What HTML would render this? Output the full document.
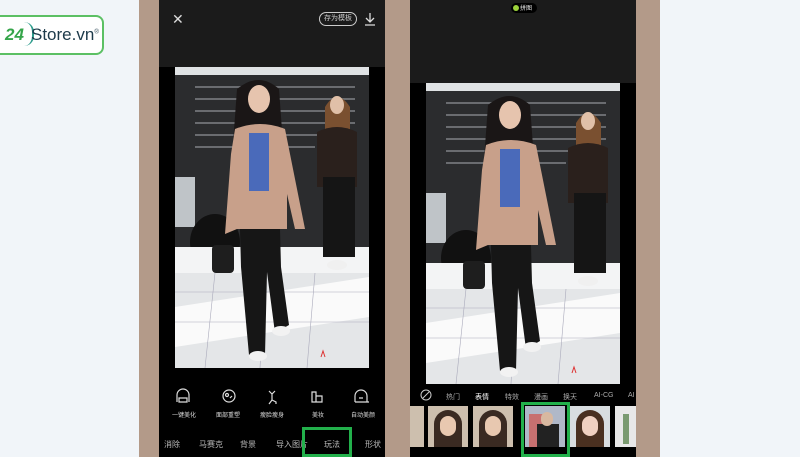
<!DOCTYPE html>
<html><head><meta charset="utf-8">
<style>
*{margin:0;padding:0;box-sizing:border-box}
body{width:800px;height:457px;overflow:hidden;background:#f1f5f9;position:relative;font-family:"Liberation Sans","Noto Sans CJK SC",sans-serif}
.tan{position:absolute;left:139px;top:0;width:521px;height:457px;background:#b39a89}
.phone{position:absolute;top:0;height:457px;background:#000}
.top{position:absolute;left:0;top:0;right:0;background:#1b1b1b}
.photo{position:absolute;width:194px;height:301px;overflow:hidden}
.t{position:absolute;color:#ddd;font-size:6px;white-space:nowrap}
.tab{position:absolute;color:#bbb;font-size:8px;white-space:nowrap}
.green{position:absolute;border:3px solid #22b04b}
.thumb{position:absolute;top:406px;width:40px;height:41px;background:#cdbfae;overflow:hidden}
</style></head><body>
<div style="position:absolute;left:-8px;top:15px;width:112px;height:40px;border:2.5px solid #5cc064;border-radius:8px;background:#fff;border-left-color:#2aa39a"></div>
<div style="position:absolute;left:5px;top:25px;font-size:17px;font-weight:bold;font-style:italic;color:#35a54a">24</div>
<div style="position:absolute;left:24px;top:22px;width:10px;height:24px;border-right:2px solid #2a9a8a;border-radius:0 12px 12px 0"></div>
<div style="position:absolute;left:31px;top:25px;font-size:17px;color:#1d3a4a">Store.vn<sup style="font-size:6px">®</sup></div>

<div class="tan"></div>

<div class="phone" style="left:159px;width:226px">
  <div class="top" style="height:67px"></div>
  <div style="position:absolute;left:13px;top:12px;color:#ddd;font-size:14px;line-height:14px">✕</div>
  <div style="position:absolute;left:160px;top:12px;width:38px;height:14px;border:1px solid #ccc;border-radius:7px;color:#ccc;font-size:7px;text-align:center;line-height:12px">存为模板</div>
  <svg style="position:absolute;left:205px;top:12px" width="12" height="14"><path d="M6 1v9M2 6l4 4 4-4M1 13h10" stroke="#ddd" stroke-width="1.3" fill="none"/></svg>
  <svg style="position:absolute;left:0;top:388px" width="226" height="20" fill="none" stroke="#ddd" stroke-width="1.2">
    <path d="M18 14v-7a6 6 0 0 1 12 0M20 10h8v4h-8zM30 6v8"/>
    <circle cx="70" cy="8" r="6"/><circle cx="68" cy="7" r="1.5"/><path d="M71 10l2-2"/>
    <path d="M110 3l3 3 3-3M113 6v6l-3 4M113 12l4 2v2"/>
    <path d="M153 4h4v10h-4zM157 8h6v6h-6z"/>
    <path d="M196 14v-6a6 6 0 0 1 12 0v6M196 14h14M200 10h4"/>
  </svg>
  <div class="t" style="left:13px;top:410px">一键美化</div>
  <div class="t" style="left:57px;top:410px">面部重塑</div>
  <div class="t" style="left:101px;top:410px">瘦脸瘦身</div>
  <div class="t" style="left:153px;top:410px">美妆</div>
  <div class="t" style="left:192px;top:410px">自动美颜</div>
  <div class="tab" style="left:5px;top:439px">消除</div>
  <div class="tab" style="left:40px;top:439px">马赛克</div>
  <div class="tab" style="left:81px;top:439px">背景</div>
  <div class="tab" style="left:117px;top:439px">导入图片</div>
  <div class="tab" style="left:165px;top:439px">玩法</div>
  <div class="tab" style="left:206px;top:439px">形状</div>
</div>
<div class="green" style="left:302px;top:427px;width:50px;height:30px"></div>

<div class="phone" style="left:410px;width:226px">
  <div class="top" style="height:83px"></div>
  <div style="position:absolute;left:101px;top:3px;width:26px;height:10px;background:#000;border-radius:5px"></div>
  <div style="position:absolute;left:103px;top:5px;width:6px;height:6px;background:#9bd13a;border-radius:50%"></div>
  <div style="position:absolute;left:110px;top:3px;color:#eee;font-size:6px">拼图</div>
  <svg style="position:absolute;left:10px;top:389px" width="12" height="12"><circle cx="6" cy="6" r="5" stroke="#ccc" fill="none"/><path d="M3 9l6-6" stroke="#ccc"/></svg>
  <div class="t" style="left:36px;top:392px;font-size:7px;color:#aaa">热门</div>
  <div class="t" style="left:65px;top:392px;font-size:7px;color:#fff">表情</div>
  <div class="t" style="left:95px;top:392px;font-size:7px;color:#aaa">特效</div>
  <div class="t" style="left:124px;top:392px;font-size:7px;color:#aaa">漫画</div>
  <div class="t" style="left:153px;top:392px;font-size:7px;color:#aaa">换天</div>
  <div class="t" style="left:184px;top:392px;font-size:7px;color:#aaa">AI-CG</div>
  <div class="t" style="left:218px;top:392px;font-size:7px;color:#aaa">AI</div>
  <div class="thumb" style="left:0;width:14px"></div>
  <div class="thumb" style="left:18px"><div style="position:absolute;left:6px;top:4px;width:28px;height:40px;background:#3a2a22;border-radius:14px 14px 0 0"></div><div style="position:absolute;left:12px;top:10px;width:16px;height:20px;background:#e8c8b0;border-radius:8px"></div></div>
  <div class="thumb" style="left:63px"><div style="position:absolute;left:6px;top:4px;width:28px;height:40px;background:#3a2a22;border-radius:14px 14px 0 0"></div><div style="position:absolute;left:12px;top:10px;width:16px;height:20px;background:#e8c8b0;border-radius:8px"></div></div>
  <div class="thumb" style="left:115px;background:#b0b8c8"><div style="position:absolute;left:4px;top:8px;width:14px;height:34px;background:#c87070"></div><div style="position:absolute;left:12px;top:18px;width:22px;height:24px;background:#222"></div><div style="position:absolute;left:16px;top:6px;width:12px;height:14px;background:#d8b8a0;border-radius:6px"></div></div>
  <div class="thumb" style="left:160px;background:#d8dde0"><div style="position:absolute;left:6px;top:4px;width:28px;height:40px;background:#4a3020;border-radius:14px 14px 0 0"></div><div style="position:absolute;left:12px;top:10px;width:16px;height:20px;background:#f0d0c0;border-radius:8px"></div></div>
  <div class="thumb" style="left:205px;width:21px;background:#e8e8e8"><div style="position:absolute;left:8px;top:8px;width:6px;height:30px;background:#7a9a70"></div></div>
</div>
<div class="green" style="left:521px;top:402px;width:49px;height:55px"></div>

<div class="photo" style="left:175px;top:67px">
<svg width="194" height="301" viewBox="0 0 194 301">
<rect width="194" height="301" fill="#e8eaec"/>
<rect x="0" y="0" width="194" height="200" fill="#2b2c2e"/>
<rect x="0" y="0" width="194" height="8" fill="#dfe2e4"/>
<g stroke="#6a6c70" stroke-width="2"><path d="M20 20h160M20 32h160M20 44h160M20 56h160M20 68h160M20 80h120"/></g>
<rect x="0" y="110" width="20" height="50" fill="#bfc4c8"/>
<ellipse cx="40" cy="175" rx="25" ry="28" fill="#111"/>
<rect x="0" y="180" width="194" height="26" fill="#f3f4f5"/>
<path d="M0 206h194v95H0z" fill="#e4e6e8"/>
<path d="M0 240l194-30v40L0 280z" fill="#fafafa"/>
<g stroke="#aab" stroke-width="0.6"><path d="M0 225h194M0 255h194M40 206l-10 95M90 206l-5 95M140 206l-8 95"/></g>
<path d="M150 40q12-20 25 0v30h-25z" fill="#7a5030"/>
<ellipse cx="162" cy="38" rx="7" ry="9" fill="#e0c0a8"/>
<path d="M142 65q20-10 40 0v55h-40z" fill="#2a201c"/>
<path d="M148 110h32v80h-32z" fill="#151515"/>
<ellipse cx="162" cy="198" rx="10" ry="5" fill="#f0f0f0"/>
<path d="M62 22q22-18 42 0l4 55h-50z" fill="#1a1616"/>
<ellipse cx="84" cy="32" rx="11" ry="14" fill="#e6c4ae"/>
<path d="M64 125H104L106 200L114 258L100 266L92 205L90 288L74 288L66 200Z" fill="#161616"/>
<path d="M60 62q25-10 50 0l20 100h-10l-8-35v35H62l-12 5 6-80z" fill="#c8a08a"/>
<path d="M74 66h20v58H74z" fill="#4a6aba"/>
<rect x="37" y="178" width="22" height="28" rx="4" fill="#1e1e1e"/>
<ellipse cx="83" cy="289" rx="9" ry="5" fill="#f2f2f2"/>
<ellipse cx="106" cy="264" rx="9" ry="5" fill="#f2f2f2"/>
<path d="M146 290l2-6 2 6" stroke="#d33" fill="none"/>
</svg></div>
<div class="photo" style="left:426px;top:83px">
<svg width="194" height="301" viewBox="0 0 194 301">
<rect width="194" height="301" fill="#e8eaec"/>
<rect x="0" y="0" width="194" height="200" fill="#2b2c2e"/>
<rect x="0" y="0" width="194" height="8" fill="#dfe2e4"/>
<g stroke="#6a6c70" stroke-width="2"><path d="M20 20h160M20 32h160M20 44h160M20 56h160M20 68h160M20 80h120"/></g>
<rect x="0" y="110" width="20" height="50" fill="#bfc4c8"/>
<ellipse cx="40" cy="175" rx="25" ry="28" fill="#111"/>
<rect x="0" y="180" width="194" height="26" fill="#f3f4f5"/>
<path d="M0 206h194v95H0z" fill="#e4e6e8"/>
<path d="M0 240l194-30v40L0 280z" fill="#fafafa"/>
<g stroke="#aab" stroke-width="0.6"><path d="M0 225h194M0 255h194M40 206l-10 95M90 206l-5 95M140 206l-8 95"/></g>
<path d="M150 40q12-20 25 0v30h-25z" fill="#7a5030"/>
<ellipse cx="162" cy="38" rx="7" ry="9" fill="#e0c0a8"/>
<path d="M142 65q20-10 40 0v55h-40z" fill="#2a201c"/>
<path d="M148 110h32v80h-32z" fill="#151515"/>
<ellipse cx="162" cy="198" rx="10" ry="5" fill="#f0f0f0"/>
<path d="M62 22q22-18 42 0l4 55h-50z" fill="#1a1616"/>
<ellipse cx="84" cy="32" rx="11" ry="14" fill="#e6c4ae"/>
<path d="M64 125H104L106 200L114 258L100 266L92 205L90 288L74 288L66 200Z" fill="#161616"/>
<path d="M60 62q25-10 50 0l20 100h-10l-8-35v35H62l-12 5 6-80z" fill="#c8a08a"/>
<path d="M74 66h20v58H74z" fill="#4a6aba"/>
<rect x="37" y="178" width="22" height="28" rx="4" fill="#1e1e1e"/>
<ellipse cx="83" cy="289" rx="9" ry="5" fill="#f2f2f2"/>
<ellipse cx="106" cy="264" rx="9" ry="5" fill="#f2f2f2"/>
<path d="M146 290l2-6 2 6" stroke="#d33" fill="none"/>
</svg></div>
</body></html>
